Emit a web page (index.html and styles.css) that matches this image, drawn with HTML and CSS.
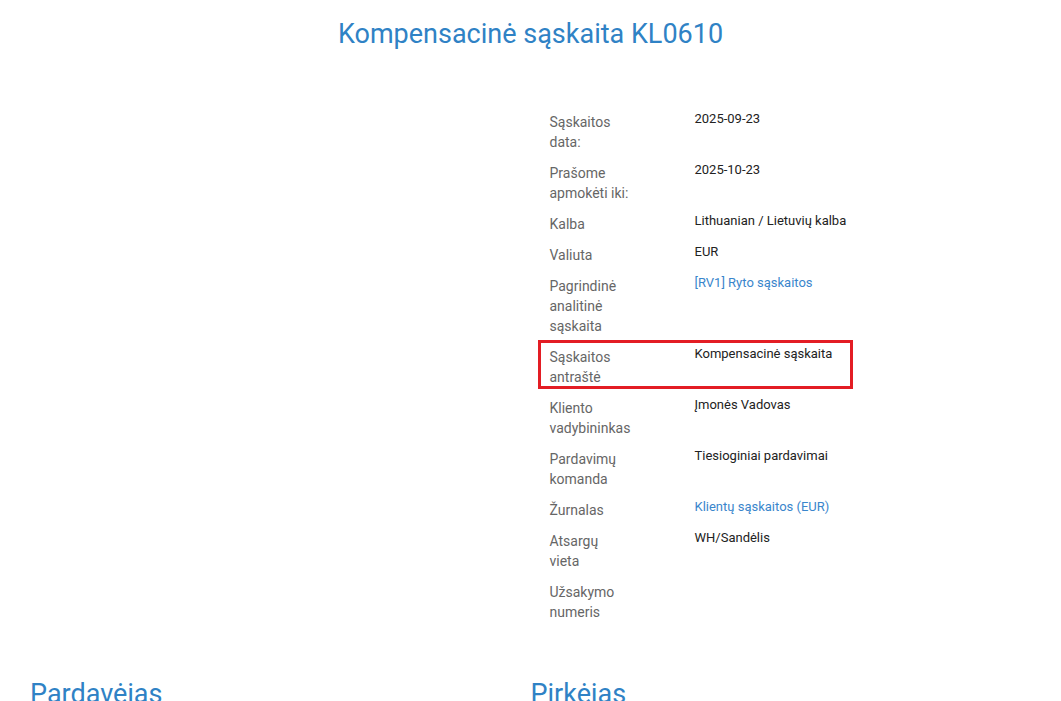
FILE: index.html
```
<!DOCTYPE html>
<html lang="lt">
<head>
<meta charset="utf-8">
<title>Kompensacinė sąskaita KL0610</title>
<link rel="stylesheet" href="styles.css">
</head>
<body>
<div class="page">
  <h1 class="title">Kompensacinė sąskaita KL0610</h1>
  <div class="info-row">
    <div class="info-spacer"></div>
    <div class="info">
      <div class="row"><div class="lbl">Sąskaitos<br>data:</div><div class="val">2025-09-23</div></div>
      <div class="row"><div class="lbl">Prašome<br>apmokėti iki:</div><div class="val">2025-10-23</div></div>
      <div class="row"><div class="lbl">Kalba</div><div class="val">Lithuanian / Lietuvių kalba</div></div>
      <div class="row"><div class="lbl">Valiuta</div><div class="val">EUR</div></div>
      <div class="row"><div class="lbl">Pagrindinė<br>analitinė<br>sąskaita</div><div class="val"><a class="link" href="#">[RV1] Ryto sąskaitos</a></div></div>
      <div class="row highlight"><div class="lbl">Sąskaitos<br>antraštė</div><div class="val">Kompensacinė sąskaita</div></div>
      <div class="row"><div class="lbl">Kliento<br>vadybininkas</div><div class="val">Įmonės Vadovas</div></div>
      <div class="row"><div class="lbl">Pardavimų<br>komanda</div><div class="val">Tiesioginiai pardavimai</div></div>
      <div class="row"><div class="lbl">Žurnalas</div><div class="val"><a class="link" href="#">Klientų sąskaitos (EUR)</a></div></div>
      <div class="row"><div class="lbl">Atsargų<br>vieta</div><div class="val">WH/Sandėlis</div></div>
      <div class="row"><div class="lbl">Užsakymo<br>numeris</div><div class="val"></div></div>
    </div>
  </div>
  <div class="parties">
    <h2 class="party">Pardavėjas</h2>
    <h2 class="party">Pirkėjas</h2>
  </div>
</div>
</body>
</html>
```
FILE: styles.css
```
html, body {
  margin: 0;
  padding: 0;
  background: #ffffff;
  font-family: Roboto, "Liberation Sans", Arial, sans-serif;
}
.page {
  padding: 0 30px;
}
.title {
  margin: 0;
  padding-top: 16px;
  text-align: center;
  font-size: 27px;
  font-weight: 400;
  line-height: 36px;
  color: #2f82c5;
}
.info-row {
  display: grid;
  grid-template-columns: 1fr 1fr;
  margin-top: 53px;
}
.info {
  margin-left: 7px;
  width: 315px;
  display: flex;
  flex-direction: column;
  gap: 2px;
}
.row {
  display: grid;
  grid-template-columns: 157px 1fr;
  padding: 7px 0 2px;
}
.lbl {
  padding-left: 12px;
  font-size: 14px;
  line-height: 20px;
  color: #666666;
}
.val {
  margin-top: -3px;
  font-size: 13px;
  line-height: 20px;
  color: #222222;
}
.link {
  color: #3a86cc;
  text-decoration: none;
}
.highlight {
  outline: 3px solid #e31d24;
  outline-offset: -3px;
}
.parties {
  display: grid;
  grid-template-columns: 1fr 1fr;
  margin-top: 52px;
}
.party {
  margin: 0;
  font-size: 27px;
  font-weight: 400;
  line-height: 36px;
  color: #2f82c5;
}
```
